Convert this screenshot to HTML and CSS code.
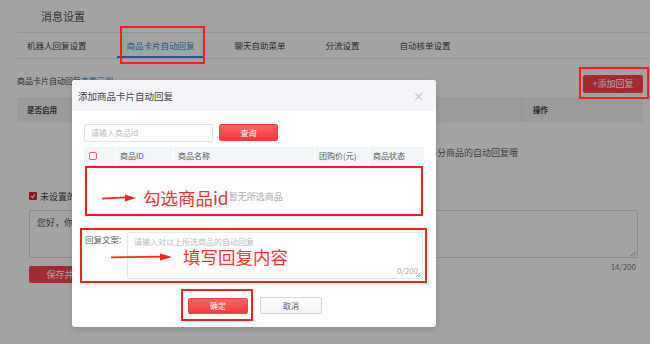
FILE: index.html
```html
<!DOCTYPE html>
<html lang="zh-CN">
<head>
  <meta charset="utf-8">
  <title>消息设置</title>
  <link rel="stylesheet" href="styles.css">
</head>
<body>
  <div class="page">
    <div class="page-title">消息设置</div>

    <div class="tabs">
      <div class="tab">机器人回复设置</div>
      <div class="tab active">商品卡片自动回复</div>
      <div class="tab">聊天自助菜单</div>
      <div class="tab">分流设置</div>
      <div class="tab">自动核单设置</div>
    </div>

    <div class="toolbar">
      <div class="toolbar-tip">商品卡片自动回复<a>查看示例</a></div>
      <div class="btn-red btn-add">+添加回复</div>
    </div>

    <div class="list-head">
      <div class="list-col">是否启用</div>
      <div class="list-col list-op">操作</div>
    </div>
    <div class="list-empty">暂未设置，您可以添加部分商品的自动回复哦</div>

    <div class="default-row">
      <span class="check-on">
        <svg width="6" height="6" viewBox="0 0 6 6"><path d="M1 3.2 L2.5 4.6 L5 1.4" fill="none" stroke="#fff" stroke-width="1.1"/></svg>
      </span>
      <span>未设置的商品使用以下默认回复</span>
    </div>
    <div class="default-text">
      您好，你咨询的商品信息已收到，请稍等
      <svg class="grip" width="7" height="7" viewBox="0 0 7 7"><path d="M1 6 L6 1 M3.5 6 L6 3.5" stroke="#999" stroke-width="0.8"/></svg>
    </div>
    <div class="save-row">
      <div class="btn-red btn-save">保存并发布</div>
      <div class="count">14/200</div>
    </div>
  </div>

  <div class="mask"></div>

  <div class="mark mark-tab"></div>
  <div class="mark mark-add"></div>

  <div class="modal">
    <div class="modal-head">
      <span>添加商品卡片自动回复</span>
      <span class="modal-close">×</span>
    </div>
    <div class="modal-body">
      <div class="search">
        <div class="search-input">请输入商品id</div>
        <div class="btn-grad btn-query">查询</div>
      </div>

      <div class="goods-head">
        <div class="goods-col"><span class="check-off"></span></div>
        <div class="goods-col">商品ID</div>
        <div class="goods-col">商品名称</div>
        <div class="goods-col">团购价(元)</div>
        <div class="goods-col">商品状态</div>
      </div>

      <div class="pick-box">
        <svg class="arrow" width="34" height="8" viewBox="0 0 34 8"><path d="M0 4.6 L24 3.4" stroke="#f22" stroke-width="1.6"/><path d="M23 0.4 L34 4 L23 7.4 Z" fill="#f22"/></svg>
        <span class="note">勾选商品id</span><span class="empty-tip">暂无所选商品</span>
      </div>

      <div class="reply-box">
        <div class="reply-label">回复文案:</div>
        <div class="reply-text">
          <span class="placeholder">请输入对以上所选商品的自动回复</span>
          <span class="reply-count">0/200</span>
          <svg class="grip" width="7" height="7" viewBox="0 0 7 7"><path d="M1 6 L6 1 M3.5 6 L6 3.5" stroke="#999" stroke-width="0.8"/></svg>
        </div>
        <div class="reply-note">
          <svg class="arrow" width="61" height="8" viewBox="0 0 61 8"><path d="M0 4.4 L50 3.6" stroke="#f22" stroke-width="1.6"/><path d="M49 0.4 L61 4 L49 7.4 Z" fill="#f22"/></svg>
          <span class="note">填写回复内容</span>
        </div>
      </div>

      <div class="modal-foot">
        <div class="ok-box"><div class="btn-grad btn-ok">确定</div></div>
        <div class="btn-cancel">取消</div>
      </div>
    </div>
  </div>
</body>
</html>
```
FILE: styles.css
```css
* {
  box-sizing: border-box;
}

body {
  margin: 0;
  width: 650px;
  height: 344px;
  overflow: hidden;
  background: #fff;
  color: #444;
  font-family: "Noto Sans CJK SC", "Noto Sans", sans-serif;
  font-size: 8.5px;
  position: relative;
}

.page {
  padding-left: 17px;
}

.page-title {
  height: 33px;
  line-height: 32px;
  padding-left: 24px;
  font-size: 11px;
  color: #555;
  border-bottom: 1px solid #e6e6e6;
}

.tabs {
  display: flex;
  height: 26px;
  border-bottom: 1px solid #e6e6e6;
}

.tab {
  padding: 0 10px;
  margin-right: 20px;
  line-height: 25px;
  color: #444;
}

.tab.active {
  color: #2d8cf0;
  border-bottom: 2px solid #2d8cf0;
}

.toolbar {
  display: flex;
  justify-content: space-between;
  align-items: flex-end;
  height: 38px;
  padding: 0 7px 4px 0;
}

.toolbar-tip {
  font-size: 8px;
  line-height: 12px;
  margin-bottom: 6px;
}

.toolbar-tip a {
  color: #2d8cf0;
}

.btn-red {
  background: #ff444b;
  color: #fff;
  border-radius: 2px;
  text-align: center;
}

.btn-add {
  width: 60px;
  height: 18px;
  line-height: 18px;
  font-size: 9px;
}

.list-head {
  display: grid;
  grid-template-columns: 1fr 122px;
  height: 25px;
  margin-right: 7px;
  background: #f2f2f2;
  font-size: 7.5px;
  font-weight: bold;
  line-height: 25px;
}

.list-col {
  padding-left: 10px;
}

.list-op {
  padding-left: 11px;
  border-left: 1px solid #e4e4e4;
}

.list-empty {
  height: 62px;
  line-height: 62px;
  text-align: right;
  padding-right: 132px;
  font-size: 9px;
  color: #666;
}

.default-row {
  display: flex;
  align-items: center;
  height: 24px;
  padding-left: 12px;
  gap: 3px;
  font-size: 9px;
}

.check-on {
  display: flex;
  align-items: center;
  justify-content: center;
  width: 8px;
  height: 8px;
  border-radius: 1px;
  background: #e42020;
}

.default-text {
  position: relative;
  height: 48px;
  margin: 2px 12px 0 12px;
  padding: 5px 7px;
  border: 1px solid #ddd;
  border-radius: 2px;
  font-size: 9px;
  color: #555;
}

.grip {
  position: absolute;
  right: 0;
  bottom: 0;
}

.save-row {
  display: flex;
  justify-content: space-between;
  align-items: flex-start;
  margin: 4px 14px 0 12px;
}

.btn-save {
  width: 80px;
  height: 17px;
  line-height: 17px;
  margin-top: 4px;
  font-size: 9px;
}

.count {
  line-height: 10px;
  font-size: 8px;
  color: #777;
}

.mask {
  position: absolute;
  inset: 0;
  background: rgba(0, 0, 0, 0.36);
}

.mark {
  position: absolute;
  border: 2px solid #fb1d1d;
}

.mark-tab {
  left: 120px;
  top: 26px;
  width: 85px;
  height: 38px;
}

.mark-add {
  left: 579px;
  top: 67px;
  width: 70px;
  height: 32px;
}

.modal {
  position: absolute;
  left: 72px;
  top: 80px;
  width: 364px;
  height: 247px;
  background: #fff;
  border-radius: 3px;
  box-shadow: 0 2px 6px rgba(0, 0, 0, 0.15);
  overflow: hidden;
}

.modal-head {
  display: flex;
  justify-content: space-between;
  align-items: center;
  height: 31px;
  padding: 0 12px 0 6px;
  background: #f4f5f8;
  font-size: 9.5px;
  color: #444;
}

.modal-close {
  font-size: 11px;
  color: #b5b5b5;
}

.modal-body {
  padding: 13px 12px 0;
}

.search {
  display: flex;
  align-items: flex-start;
  gap: 6px;
}

.search-input {
  width: 129px;
  height: 18px;
  line-height: 16px;
  padding-left: 6px;
  border: 1px solid #e3e3e3;
  border-radius: 2px;
  font-size: 8px;
  color: #bbb;
}

.btn-grad {
  background: linear-gradient(#ff6363, #f23a3d);
  color: #fff;
  border-radius: 2px;
  text-align: center;
  font-size: 8px;
  border: 1px solid #f24044;
}

.btn-query {
  width: 59px;
  height: 17px;
  line-height: 15px;
}

.goods-head {
  display: grid;
  grid-template-columns: 31px 58px 141px 54px 56px;
  height: 17px;
  margin-top: 5px;
  background: #f3f6f9;
  font-size: 8px;
  color: #555;
  line-height: 17px;
}

.goods-col {
  padding-left: 4px;
  border-left: 1px solid #fff;
}

.goods-col:first-child {
  display: flex;
  align-items: center;
  border-left: none;
  padding-left: 5px;
}

.check-off {
  width: 8px;
  height: 8px;
  border: 1px solid #f25a5a;
  border-radius: 2px;
  background: #fff;
}

.pick-box {
  display: flex;
  align-items: center;
  height: 50px;
  margin: 2px 1px 0;
  padding: 14px 0 0 15px;
  border: 2px solid #fb1d1d;
}

.arrow {
  flex: none;
}

.pick-box .arrow {
  margin-right: 7px;
}

.note {
  font-size: 17.5px;
  line-height: 20px;
  color: #f43434;
}

.empty-tip {
  font-size: 9px;
  color: #aaa;
  margin-top: -3px;
}

.reply-box {
  position: relative;
  display: flex;
  margin: 12px -3px 0 -4px;
  padding: 2px 2px 2px 3px;
  border: 2px solid #fb1d1d;
}

.reply-label {
  width: 42px;
  padding-top: 1px;
  font-size: 8.5px;
  line-height: 12px;
  color: #555;
}

.reply-text {
  position: relative;
  flex: 1;
  height: 47px;
  padding: 4px 6px;
  border: 1px solid #e8e8e8;
  border-radius: 2px;
  font-size: 8px;
  line-height: 10px;
  color: #bbb;
}

.reply-count {
  position: absolute;
  right: 4px;
  bottom: 2px;
  color: #aaa;
}

.reply-note {
  position: absolute;
  left: 29px;
  top: 17px;
  display: flex;
  align-items: center;
  height: 20px;
}

.reply-note .arrow {
  margin-right: 11px;
}

.modal-foot {
  display: flex;
  justify-content: center;
  align-items: flex-start;
  gap: 7px;
  margin-top: 6px;
  padding-right: 5px;
}

.ok-box {
  padding: 7px 3px 5px 5px;
  border: 2px solid #fb1d1d;
}

.btn-ok {
  width: 60px;
  height: 16px;
  line-height: 14px;
}

.btn-cancel {
  width: 62px;
  height: 17px;
  margin-top: 8px;
  line-height: 15px;
  text-align: center;
  font-size: 8px;
  color: #555;
  border: 1px solid #d4d4d4;
  border-radius: 2px;
  background: linear-gradient(#fff, #f4f4f4);
}
```
